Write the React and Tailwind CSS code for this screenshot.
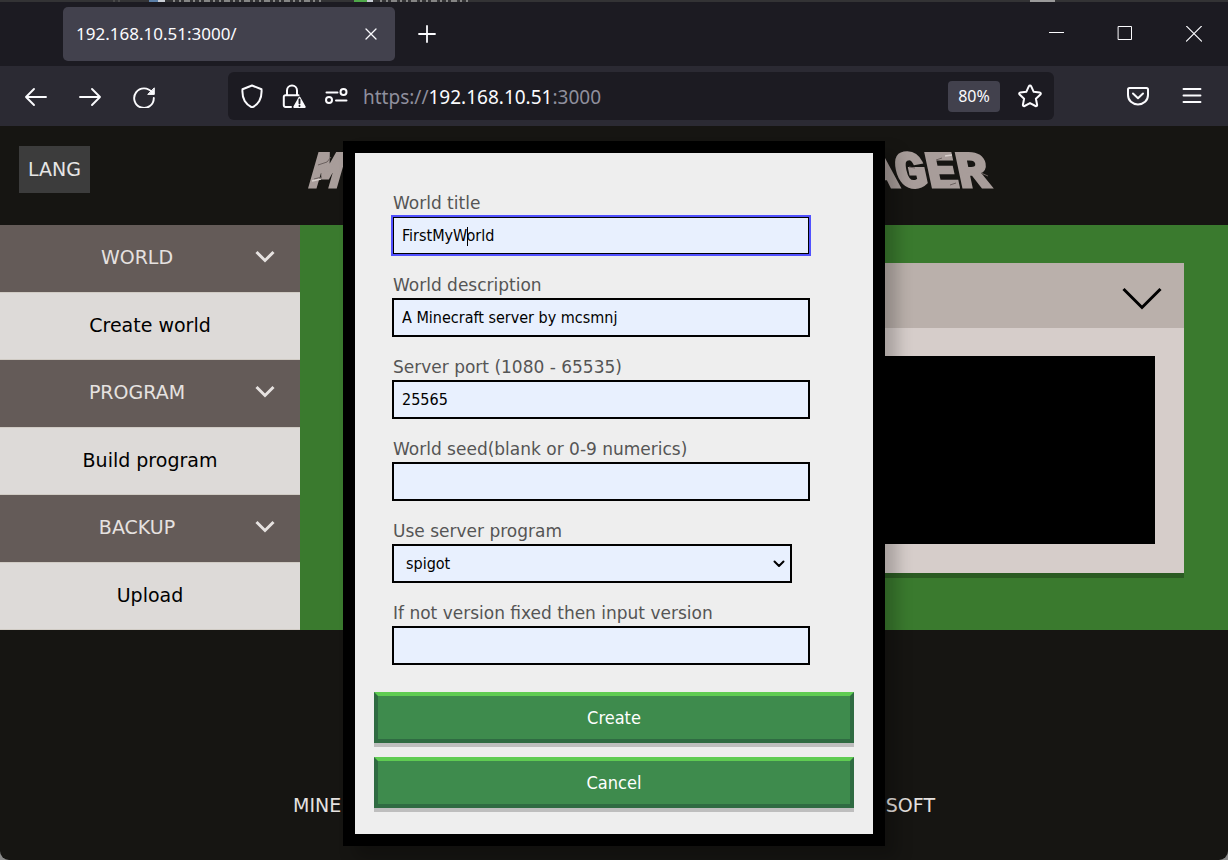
import React from "react";

const icon = { fill: "none", stroke: "currentColor", strokeLinecap: "round", strokeLinejoin: "round" };

function DesktopStrip() {
  return (
    <svg className="block h-[2px] w-full shrink-0 bg-[#333335]" aria-hidden="true">
      <rect x="113" width="2" height="2" fill="#4a4a4a" />
      <rect x="118" width="2" height="2" fill="#4a4a4a" />
      <rect x="149" width="9" height="2" fill="#5b7fa8" />
      <rect x="158" width="7" height="2" fill="#c9ced6" />
      <path d="M173 1H322" stroke="#858585" strokeWidth="2" strokeDasharray="2 4 2 3 6 3" />
      <rect x="354" width="13" height="2" fill="#4fa84a" />
      <rect x="367" width="6" height="2" fill="#c9ced6" />
      <path d="M380 1H470" stroke="#858585" strokeWidth="2" strokeDasharray="2 4 2 3 6 3" />
      <rect x="1030" width="25" height="2" fill="#9a9a9a" />
    </svg>
  );
}

function TabBar() {
  return (
    <div className="flex h-16 shrink-0 items-center bg-[#1c1b22] pl-[63px]">
      <div className="flex h-[54px] w-[332px] items-center justify-between rounded-[5px] bg-[#42414d] pr-3 pl-[13px] text-[17px] text-[#fbfbfe]">
        <span>192.168.10.51:3000/</span>
        <button aria-label="Close tab" className="flex size-6 items-center justify-center">
          <svg className="size-3" viewBox="0 0 12 12" {...icon} strokeWidth="1.3"><path d="M1 1l10 10M11 1L1 11" /></svg>
        </button>
      </div>
      <button aria-label="New tab" className="ml-4 flex size-8 items-center justify-center">
        <svg className="size-[18px]" viewBox="0 0 18 18" {...icon} strokeWidth="1.8"><path d="M9 1v16M1 9h16" /></svg>
      </button>
      <div className="ml-auto flex h-full">
        <button aria-label="Minimize" className="flex w-[69px] items-center justify-center">
          <svg className="size-4" viewBox="0 0 16 16" {...icon} strokeLinecap="butt"><path d="M1 6.500h15" /></svg>
        </button>
        <button aria-label="Maximize" className="flex w-[69px] items-center justify-center">
          <svg className="size-4" viewBox="0 0 16 16" {...icon} strokeLinejoin="miter"><path d="M1.500 .5h13v13h-13z" /></svg>
        </button>
        <button aria-label="Close" className="flex w-[69px] items-center justify-center">
          <svg className="size-4" viewBox="0 0 16 16" {...icon} strokeWidth="1.2"><path d="M.5 .2l15 15M15.500 .2l-15 15" /></svg>
        </button>
      </div>
    </div>
  );
}

function ToolButton({ label, children }) {
  return (
    <button aria-label={label} className="flex h-11 w-[54px] items-center justify-center">{children}</button>
  );
}

function NavBar() {
  return (
    <div className="flex h-[60px] shrink-0 items-center bg-[#2b2a33] px-[9px]">
      <ToolButton label="Back">
        <svg className="size-6" viewBox="0 0 24 24" {...icon} strokeWidth="1.9"><path d="M22 13H2M10 5l-8 8 8 8" /></svg>
      </ToolButton>
      <ToolButton label="Forward">
        <svg className="size-6" viewBox="0 0 24 24" {...icon} strokeWidth="1.9"><path d="M2 13h20M14 5l8 8-8 8" /></svg>
      </ToolButton>
      <ToolButton label="Reload">
        <svg className="size-6" viewBox="0 0 24 24" {...icon} strokeWidth="1.9">
          <path d="M20 8.500A9.800 9.800 0 1 0 21.800 14" />
          <path d="M22.300 4.200v6.200h-6.200z" fill="currentColor" strokeWidth="1" />
        </svg>
      </ToolButton>
      <div className="ml-[57px] mr-[57px] flex h-12 flex-1 items-center rounded-md bg-[#1c1b22] pr-3">
        <div className="flex items-center gap-[18px] pl-3">
          <svg className="size-6" viewBox="0 0 24 24" {...icon} strokeWidth="2">
            <path d="M12 1.500l9.500 3.700c.3 4-.2 8.300-2.200 11.800-1.700 2.900-4.200 4.900-7.300 6.500-3.100-1.600-5.600-3.600-7.300-6.500C2.700 13.500 2.200 9.200 2.500 5.200z" />
          </svg>
          <svg className="size-6" viewBox="0 0 24 24" {...icon} strokeWidth="2">
            <path d="M5 11V6.500a5 5 0 0 1 10 0V11M9 23H3.500a1.700 1.700 0 0 1-1.700-1.700v-8.500A1.700 1.700 0 0 1 3.500 11.200h13" />
            <path d="M17.500 13.500l5.300 9.500H12.200z" fill="currentColor" strokeWidth="1.800" />
            <path d="M17.500 15.500v3.800M17.500 21.700v.3" stroke="#1c1b22" strokeWidth="1.900" />
          </svg>
          <svg className="size-6" viewBox="0 0 24 24" {...icon} strokeWidth="2">
            <path d="M2.500 8.500h11M12 16.500h10.500" />
            <circle cx="19.500" cy="8" r="3" /><circle cx="5" cy="16" r="3" />
          </svg>
        </div>
        <div role="textbox" aria-label="Address" className="ml-[15px] flex-1 pt-[3px] text-[19px] text-[#8f8f9d]">
          https://<span className="text-[#fbfbfe]">192.168.10.51</span>:3000
        </div>
        <button className="h-[31px] w-[52px] rounded-[4px] bg-[#42414d] text-base text-[#fbfbfe]">80%</button>
        <button aria-label="Bookmark" className="ml-[18px] flex size-6 items-center justify-center">
          <svg className="size-6" viewBox="0 0 24 24" {...icon} strokeWidth="2">
            <path d="M12 1.500c.5 0 .9.300 1.100.7l2.600 5.600 6.100.8c1 .1 1.300 1.200.6 1.900l-4.500 4.200 1.200 6.100c.2 1-.8 1.600-1.600 1.200L12 19.100 6.500 22c-.8.400-1.800-.2-1.600-1.200l1.200-6.100-4.500-4.200c-.7-.7-.4-1.800.6-1.900l6.100-.8 2.600-5.600c.2-.4.600-.7 1.100-.7z" />
          </svg>
        </button>
      </div>
      <ToolButton label="Pocket">
        <svg className="size-6" viewBox="0 0 24 24" {...icon} strokeWidth="2">
          <path d="M3.500 4h17a1.500 1.500 0 0 1 1.500 1.500v5.500c0 5.500-4.500 9.500-10 9.500S2 16.500 2 11V5.500a1.500 1.500 0 0 1 1.500-1.500z" />
          <path d="M7 9.500l5 4.700 5-4.700" />
        </svg>
      </ToolButton>
      <ToolButton label="Menu">
        <svg className="size-6" viewBox="0 0 24 24" {...icon} strokeWidth="1.900"><path d="M3.500 5h17M3.500 11.500h17M3.500 18h17" /></svg>
      </ToolButton>
    </div>
  );
}

function Logo() {
  const letter = {
    fontFamily: '"Liberation Mono", monospace',
    fontWeight: 700,
    fontSize: 51,
    fill: "#a89d9a",
    stroke: "#a89d9a",
    strokeWidth: 3,
  };
  return (
    <svg className="h-12 w-[690px]" viewBox="0 0 690 48" aria-hidden="true">
      <g transform="skewX(-16)"><text x="14" y="40" {...letter}>M</text></g>
      <g transform="skewX(12)"><text x="555" y="40" {...letter}>AGER</text></g>
      <g fill="none" stroke="#6b615f" strokeWidth="1">
        <path d="M13 18l9-3 4-5M9 32l8-2" />
        <path d="M604 20l6 1M631 13l6-2M645 38l6-2M676 26l7 3" />
      </g>
      <path d="M7 34l9-2M640 9l7-1" stroke="#d8d0cd" strokeWidth="1.500" />
    </svg>
  );
}

const menu = [
  { head: "WORLD", item: "Create world" },
  { head: "PROGRAM", item: "Build program" },
  { head: "BACKUP", item: "Upload" },
];

function Sidebar() {
  return (
    <nav className="w-[300px] shrink-0 text-[19px]">
      {menu.map(({ head, item }) => (
        <React.Fragment key={head}>
          <button className="flex h-[67px] w-full items-center bg-[#645b58] pr-[25px] pb-[3px] text-[#e6e2e0]">
            <span className="flex-1 pl-[19px] text-center">{head}</span>
            <svg className="size-5" viewBox="0 0 20 20" {...icon} strokeLinecap="butt" strokeLinejoin="miter" strokeWidth="3"><path d="M1.500 5l8.500 8.500L18.500 5" /></svg>
          </button>
          <a href="#" className="flex h-[68px] items-center justify-center border-y border-[#d0cbc4] bg-[#dddad8] pb-[2px] text-black">{item}</a>
        </React.Fragment>
      ))}
    </nav>
  );
}

const field = "block h-[39px] border-2 border-black bg-[#e8f0fe] font-['DejaVu_Sans_Condensed','DejaVu_Sans',sans-serif] text-base text-black";

function Field({ id, label, children }) {
  return (
    <div>
      <label htmlFor={id} className="block h-[25px] pl-px text-[17px] leading-6 text-[#555555]">{label}</label>
      {children}
    </div>
  );
}

function ActionButton({ children }) {
  return (
    <button type="button" className="h-[51px] w-full border-4 border-[#2f6b42] border-t-[#5fcc52] bg-[#3e8b4d] font-['DejaVu_Sans_Condensed','DejaVu_Sans',sans-serif] text-lg text-white shadow-[0_4px_0_rgba(0,0,0,0.2)]">{children}</button>
  );
}

function WorldDialog() {
  return (
    <form role="dialog" aria-label="Create world" className="absolute top-[15px] left-1/2 w-[542px] -translate-x-1/2 border-12 border-black bg-[#eeeeee] px-[19px] pt-[38px] pb-[26px] shadow-[12px_12px_15px_rgba(0,0,0,0.22)]">
      <div className="mb-[27px] flex flex-col gap-[18px] px-[18px] pr-[44px]">
        <Field id="title" label="World title">
          <div className="relative">
            <input id="title" defaultValue="FirstMyWorld" className={`${field} w-full px-2 outline-2 -outline-offset-1 outline-[#5151ff]`} />
            <span className="absolute top-[11px] left-[75px] h-[19px] w-px bg-black" />
          </div>
        </Field>
        <Field id="description" label="World description">
          <input id="description" defaultValue="A Minecraft server by mcsmnj" className={`${field} w-full px-2`} />
        </Field>
        <Field id="port" label="Server port (1080 - 65535)">
          <input id="port" defaultValue="25565" className={`${field} w-full px-2`} />
        </Field>
        <Field id="seed" label="World seed(blank or 0-9 numerics)">
          <input id="seed" className={`${field} w-full px-2`} />
        </Field>
        <Field id="program" label="Use server program">
          <div className="relative w-[400px] max-w-full">
            <select id="program" className={`${field} w-full appearance-none px-3`}>
              <option>spigot</option>
            </select>
            <svg className="pointer-events-none absolute top-[14px] right-[7px] size-3 text-black" viewBox="0 0 12 12" {...icon} strokeWidth="2"><path d="M1.500 3.500L6 8l4.500-4.500" /></svg>
          </div>
        </Field>
        <Field id="version" label="If not version fixed then input version">
          <input id="version" className={`${field} w-full px-2`} />
        </Field>
      </div>
      <div className="flex flex-col gap-[14px]">
        <ActionButton>Create</ActionButton>
        <ActionButton>Cancel</ActionButton>
      </div>
    </form>
  );
}

export default function App() {
  return (
    <div className="min-h-screen bg-[#8a8a8a]">
      <div className="flex min-h-screen flex-col overflow-hidden rounded-b-[9px] bg-[#161512] font-['Noto_Sans',sans-serif] text-[#fbfbfe]">
        <DesktopStrip />
        <TabBar />
        <NavBar />
        <div className="relative flex flex-1 flex-col font-['DejaVu_Sans',sans-serif]">
          <header className="relative flex h-[99px] items-start pt-5 pl-[19px]">
            <button className="h-[47px] w-[71px] bg-[#3c3c3c] text-[19px] text-[#e6e6e6]">LANG</button>
            <div className="absolute top-[21px] left-1/2 flex -translate-x-[309px]"><Logo /></div>
          </header>
          <main className="flex">
            <Sidebar />
            <section className="flex-1 bg-[#3a7a2e] py-[38px] px-[44px]">
              <div className="bg-[#d6cdca] shadow-[0_5px_0_rgba(0,0,0,0.25)]">
                <div className="flex h-[65px] items-center justify-end bg-[#bab0ab] pt-1 pr-[22px] text-black">
                  <svg className="h-6 w-10" viewBox="0 0 40 24" {...icon} strokeLinecap="butt" strokeLinejoin="miter" strokeWidth="3"><path d="M1.500 3L20 21.500 38.500 3" /></svg>
                </div>
                <div className="px-[29px] pt-7 pb-[29px]"><div className="h-[188px] bg-black" /></div>
              </div>
            </section>
          </main>
          <footer className="mt-auto flex justify-center pb-[41px] text-[19px] text-[#e6e2e0]">
            <p className="flex w-[642px] justify-between"><span>MINE</span><span>SOFT</span></p>
          </footer>
          <WorldDialog />
        </div>
      </div>
    </div>
  );
}
